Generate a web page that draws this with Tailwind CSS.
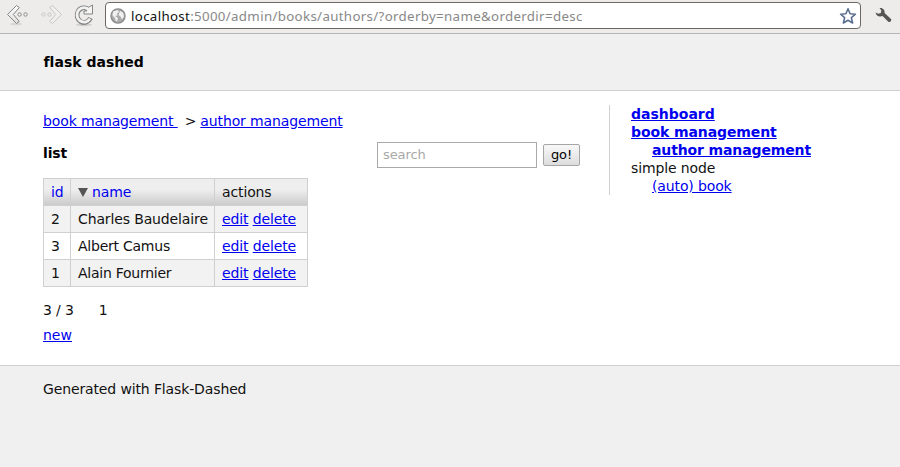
<!DOCTYPE html>
<html lang="en">
<head>
<meta charset="utf-8">
<title>flask dashed</title>
<script src="https://cdn.jsdelivr.net/npm/@tailwindcss/browser@4"></script>
</head>
<body class="h-[467px] overflow-hidden bg-[#f0f0f0] font-['DejaVu_Sans',sans-serif] text-[14px] leading-[18px] tracking-[-0.13px] text-[#111]">
<div class="flex h-[34px] items-start border-b border-[#b5b5b5] bg-[#edeceb]">
  <svg class="h-[33px] w-[105px] shrink-0" viewBox="0 0 105 33" fill="none">
    <defs><linearGradient id="g" x1="0" y1="0" x2="0" y2="1"><stop stop-color="#fff"/><stop offset="1" stop-color="#ddd"/></linearGradient></defs>
    <ellipse cx="16" cy="24" rx="6" ry="1.500" fill="#d8d7d5"/>
    <path d="M16.500 5.500 7.500 14.500l9 9 2.800-2-6-7 6-7z" fill="url(#g)" stroke="#858585" stroke-linejoin="round"/>
    <circle cx="19.600" cy="14.500" r="1.700" fill="#f4f4f4" stroke="#888"/><circle cx="25.500" cy="14.500" r="1.700" fill="#f4f4f4" stroke="#888"/>
    <path d="m52.500 5.500 9 9-9 9-2.800-2 6-7-6-7z" fill="#eee" stroke="#c9c8c7" stroke-linejoin="round"/>
    <circle cx="43.500" cy="14.500" r="1.700" stroke="#c9c8c7"/><circle cx="49.500" cy="14.500" r="1.700" stroke="#c9c8c7"/>
    <ellipse cx="84" cy="24.800" rx="8" ry="1.500" fill="#d0cfcd"/>
    <path d="M88.500 9.500A7 7.300 0 1 0 90.500 18" stroke="#858585" stroke-width="4.800"/>
    <path d="M92.500 5v9H84v-3h3l-1.500-2z" fill="#f5f5f5" stroke="#858585" stroke-linejoin="round"/>
    <path d="M89.200 10A7 7.300 0 1 0 90 18.600" stroke="#f2f2f2" stroke-width="2.800"/>
  </svg>
  <div class="mt-[2px] flex h-[27px] w-[756px] shrink-0 items-center rounded-[4px] border border-[#6b6864] bg-white pl-[4px] pr-[3px]">
    <svg class="size-4 shrink-0" viewBox="0 0 16 16"><circle cx="8" cy="8" r="7.100" fill="#aaa" stroke="#888" stroke-width="1.200"/><path d="M3 3.500 7.500 2l1.500 2-2 1.500.5 2L5 8l3 2-1 3.500-1.500-1L5 10 2.500 7.500zM10 3l3 1.500 1 4-2 3-1.500-3-2-1.500z" fill="#f0f0f0"/></svg>
    <div class="ml-[5px] flex-1 whitespace-pre font-['Noto_Sans',sans-serif] text-[13.3px] tracking-[0.33px] text-[#888]"><span class="text-[#111]">localhost</span>:5000/admin/books/authors/?orderby=name&amp;orderdir=desc</div>
    <svg class="size-[18px] shrink-0" viewBox="0 0 18 18"><path d="m9 1.800 2.100 4.900 5.300.5-4 3.500 1.200 5.300L9 13.200 4.400 16l1.200-5.300-4-3.500 5.300-.5z" fill="#fff" stroke="#5c6f91" stroke-width="1.600" stroke-linejoin="round"/></svg>
  </div>
  <svg class="ml-[14px] mt-[7px] h-[17px] w-[17px]" viewBox="0 0 17 17"><path d="M4.500 1C8 .5 10 3 9.600 6L16 12c1 1.800-1 3.800-2.700 2.800L7.500 9C4.500 10.300 1 9 .6 5.500l2.700 1.200L5.800 6 6.300 3.500z" fill="#555"/></svg>
</div>
<header class="flex h-[57px] items-center border-b border-[#d0d0d0] pl-[43.500px]"><h1 class="font-bold tracking-[0.020px] text-black">flask dashed</h1></header>
<main class="flex h-[274px] bg-white pl-[43px] pt-[14px]">
  <section class="w-[537px]">
    <nav class="mt-[7px] whitespace-pre"><a class="text-[#0000ee] underline">book management </a><span class="ml-[7px] mr-[4px]">&gt;</span><a class="text-[#0000ee] underline">author management</a></nav>
    <div class="mt-[12px] flex h-[26px] justify-between">
      <h2 class="mt-[2px] font-bold text-black">list</h2>
      <form class="flex items-center gap-[6px]"><input class="h-[26px] w-[160px] border border-[#a9a9a9] px-[5px] pb-[2px] text-[13px] tracking-[-0.100px] placeholder:text-[#a9a9a9]" placeholder="search"><button type="button" class="h-[22px] w-[37px] rounded-[2px] border border-[#a6a6a6] bg-linear-to-b from-[#f8f8f8] to-[#dddddd] text-[13px] leading-[18px] text-black">go!</button></form>
    </div>
    <table class="mt-[10px] w-[265px] table-fixed border-collapse whitespace-nowrap [&_td]:border [&_td]:border-[#d0d0d0] [&_td]:px-[7px] [&_td]:py-0 [&_th]:border [&_th]:border-[#d0d0d0] [&_th]:px-[7px] [&_th]:py-0 [&_th]:text-left [&_th]:font-normal [&_tr]:h-[27px]">
      <colgroup><col class="w-[27px]"><col class="w-[144px]"><col class="w-[93px]"></colgroup>
      <thead><tr class="bg-linear-to-b from-[#eeeeee] from-40% to-[#c9c9c9]"><th class="text-[#0000ee]">id</th><th class="text-[#0000ee]"><span class="flex items-center gap-[4px]"><svg class="h-[9px] w-[10px]" viewBox="0 0 10 9"><path d="M0 0h10L5 9z" fill="#555"/></svg>name</span></th><th>actions</th></tr></thead>
      <tbody>
        <tr class="bg-[#f2f2f2]"><td>2</td><td>Charles Baudelaire</td><td><a class="text-[#0000ee] underline">edit</a> <a class="text-[#0000ee] underline">delete</a></td></tr>
        <tr><td>3</td><td class="tracking-[-0.240px]">Albert Camus</td><td><a class="text-[#0000ee] underline">edit</a> <a class="text-[#0000ee] underline">delete</a></td></tr>
        <tr class="bg-[#f2f2f2]"><td>1</td><td class="tracking-[-0.260px]">Alain Fournier</td><td><a class="text-[#0000ee] underline">edit</a> <a class="text-[#0000ee] underline">delete</a></td></tr>
      </tbody>
    </table>
    <div class="mt-[14px] flex gap-[25px]"><span>3 / 3</span><span>1</span></div>
    <a class="mt-[7px] block w-fit tracking-normal text-[#0000ee] underline">new</a>
  </section>
  <aside class="ml-[29px] h-[90px] border-l border-[#d0d0d0] pl-[21px]">
    <ul>
      <li class="font-bold tracking-normal text-[#0000ee] underline">dashboard</li>
      <li class="font-bold tracking-[-0.100px] text-[#0000ee] underline">book management</li>
      <li class="ml-[21px] font-bold text-[#0000ee] underline">author management</li>
      <li>simple node</li>
      <li class="ml-[21px] text-[#0000ee] underline">(auto) book</li>
    </ul>
  </aside>
</main>
<footer class="border-t border-[#d0d0d0] pl-[43px] pt-[14px]">Generated with Flask-Dashed</footer>
</body>
</html>
